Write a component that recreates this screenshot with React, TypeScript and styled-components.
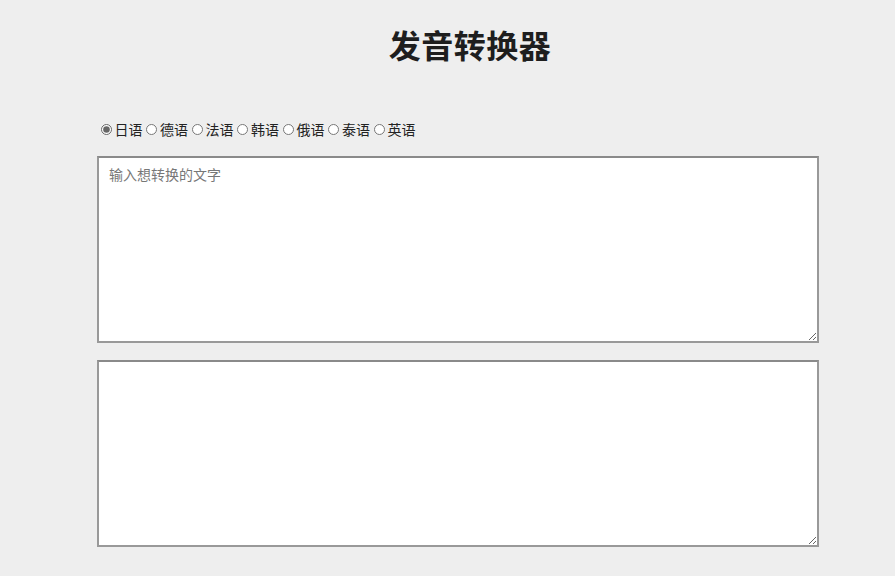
import React, { useState } from 'react';
import styled, { createGlobalStyle } from 'styled-components';

const GlobalStyle = createGlobalStyle`
  html, body {
    margin: 0;
    padding: 0;
    background: #eeeeee;
    font-family: "Noto Sans CJK SC", "Noto Sans", sans-serif;
    color: #222;
  }
`;

const Page = styled.div`
  width: 722px;
  margin-left: 97px;
  padding-top: 20px;
`;

const Title = styled.h1`
  margin: 0 0 51px 24px;
  text-align: center;
  font-size: 32px;
  line-height: 48px;
  font-weight: 700;
  letter-spacing: 0.5px;
  color: #1e1e1e;
`;

const Languages = styled.div`
  display: flex;
  align-items: center;
  height: 20px;
  margin-bottom: 17px;
  font-size: 14px;
  color: #222;
`;

const Option = styled.label`
  display: flex;
  align-items: center;
`;

const Radio = styled.input`
  width: 11px;
  height: 11px;
  margin: 0 3px 0 3.5px;
  accent-color: #666;
`;

const TextBox = styled.textarea`
  display: block;
  box-sizing: border-box;
  width: 722px;
  height: 187px;
  margin: 0 0 17px 0;
  padding: 6px 10px;
  border: 2px solid #999;
  border-top-color: #8a8a8a;
  background: #fff;
  font-family: "Noto Sans CJK SC", "Noto Sans", sans-serif;
  font-size: 14px;
  color: #222;
  outline: none;

  &::placeholder {
    color: #777;
  }
`;

const languages = ['日语', '德语', '法语', '韩语', '俄语', '泰语', '英语'];

const App = () => {
  const [lang, setLang] = useState('日语');

  return (
    <Page>
      <GlobalStyle />
      <Title>发音转换器</Title>
      <Languages>
        {languages.map((item) => (
          <Option key={item}>
            <Radio
              type='radio'
              name='lang'
              checked={lang === item}
              onChange={() => setLang(item)}
            />
            {item}
          </Option>
        ))}
      </Languages>
      <TextBox placeholder='输入想转换的文字' />
      <TextBox readOnly />
    </Page>
  );
};

export default App;
